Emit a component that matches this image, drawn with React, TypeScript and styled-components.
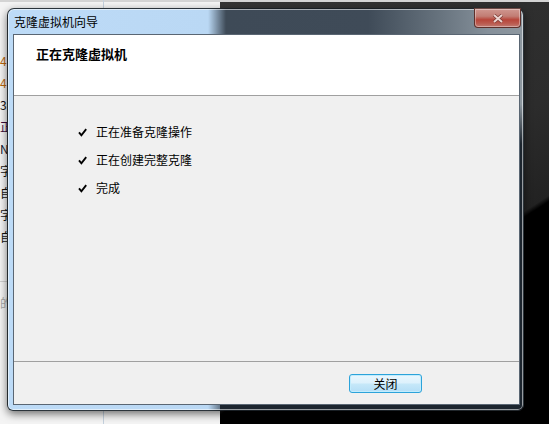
import styled, { createGlobalStyle } from "styled-components";

const GlobalStyle = createGlobalStyle`
  html, body {
    margin: 0;
    padding: 0;
  }
  body {
    width: 549px;
    height: 424px;
    overflow: hidden;
    background: #000;
    font-family: "Noto Sans CJK SC", "Noto Sans", sans-serif;
  }
`;

const steps = ["正在准备克隆操作", "正在创建完整克隆", "完成"];

// text of the window lying behind the dialog, mostly covered
const behindLines = [
  { text: "4", color: "#b8660c" },
  { text: "4", color: "#b8660c" },
  { text: "30", color: "#111" },
  { text: "正", color: "#3a0a3a" },
  { text: "N", color: "#0d1630" },
  { text: "字", color: "#111" },
  { text: "自", color: "#111" },
  { text: "字", color: "#111" },
  { text: "自", color: "#111" },
];

function CheckIcon() {
  return (
    <svg width="9" height="9" viewBox="0 0 9 9">
      <path d="M1 4.4 L3.4 7.3 L8.2 1.2" fill="none" stroke="#000" strokeWidth="1.9" />
    </svg>
  );
}

function CloseGlyph() {
  return (
    <svg width="12" height="9" viewBox="0 0 12 9">
      <path d="M2 1 L10 8 M10 1 L2 8" stroke="#7a3a34" strokeWidth="3.4" />
      <path d="M2 1 L10 8 M10 1 L2 8" stroke="#ecd4d0" strokeWidth="2" />
    </svg>
  );
}

export default function App() {
  return (
    <>
      <GlobalStyle />
      <Desktop>
        <BehindWindow>
          <BehindColumn>
            {behindLines.map((line, i) => (
              <BehindLine key={i} $color={line.color}>
                {line.text}
              </BehindLine>
            ))}
            <BehindRule />
            <BehindLine $color="#a8a8a8">的</BehindLine>
          </BehindColumn>
        </BehindWindow>

        <Dialog>
          <TitleBar>
            <Title>克隆虚拟机向导</Title>
            <CloseButton aria-label="关闭">
              <CloseGlyph />
            </CloseButton>
          </TitleBar>
          <Client>
            <Header>
              <HeaderTitle>正在克隆虚拟机</HeaderTitle>
            </Header>
            <Body>
              {steps.map((step) => (
                <StepRow key={step}>
                  <CheckIcon />
                  <span>{step}</span>
                </StepRow>
              ))}
            </Body>
            <Footer>
              <PushButton>关闭</PushButton>
            </Footer>
          </Client>
        </Dialog>
      </Desktop>
    </>
  );
}

const Desktop = styled.div`
  position: relative;
  width: 549px;
  height: 424px;
  box-sizing: border-box;
  padding: 8px 0 0 7px;
  overflow: hidden;
  background:
    linear-gradient(#d4d4d4, #d4d4d4) left top / 100% 2px no-repeat,
    linear-gradient(#f4f4f4, #f4f4f4) left top / 220px 100% no-repeat,
    linear-gradient(147deg, #353535 0, #2c2c2c 260px, #222 343px, #000 348px) right top / 329px 100% no-repeat,
    #000;
`;

const BehindWindow = styled.div`
  position: absolute;
  left: 0;
  top: 0;
  width: 220px;
  height: 100%;
  display: flex;
`;

const BehindColumn = styled.div`
  width: 104px;
  box-sizing: border-box;
  padding-top: 50px;
  border-right: 1px solid #c4d1de;
  display: flex;
  flex-direction: column;
  font-size: 12px;
  line-height: 22px;
`;

const BehindLine = styled.div<{ $color: string }>`
  color: ${(p) => p.$color};
  white-space: nowrap;
`;

const BehindRule = styled.div`
  height: 1px;
  margin: 33px 0 10px;
  background: #d0d0d0;
`;

const Dialog = styled.section`
  position: relative;
  z-index: 1;
  width: 517px;
  height: 403px;
  box-sizing: border-box;
  display: flex;
  flex-direction: column;
  padding: 0 3px 5px 5px;
  border: 1px solid rgba(18, 22, 26, 0.85);
  border-radius: 7px 7px 6px 6px;
  box-shadow:
    inset 0 0 0 1px rgba(255, 255, 255, 0.55),
    0 3px 9px rgba(0, 0, 0, 0.55);
  background:
    linear-gradient(to bottom, rgba(28, 38, 47, 0) 95px, #1c252e 135px) right top / calc(100% - 212px) 100% no-repeat,
    linear-gradient(
      to right,
      #bddbf7 0,
      #bad8f4 200px,
      #3e4a57 218px,
      #3f4b58 360px,
      #66727d 430px,
      #85909a 480px,
      #8d979f 100%
    );
`;

const TitleBar = styled.header`
  height: 25px;
  display: flex;
  align-items: flex-start;
  justify-content: space-between;
  padding-left: 1px;
  margin-right: -1px;
`;

const Title = styled.h1`
  margin: 0;
  font-size: 12px;
  font-weight: normal;
  line-height: 25px;
  color: #000;
`;

const CloseButton = styled.button`
  width: 47px;
  height: 20px;
  margin-top: -1px;
  padding: 0;
  display: flex;
  align-items: center;
  justify-content: center;
  border: 1px solid #5e2f2a;
  border-top-color: #6d4a46;
  border-radius: 0 0 4px 4px;
  box-shadow: inset 0 0 0 1px rgba(255, 255, 255, 0.35);
  background: linear-gradient(
    to bottom,
    #cf9790 0%,
    #c27d74 40%,
    #b7453a 60%,
    #bb5a4f 80%,
    #c07a72 100%
  );
`;

const Client = styled.main`
  flex: 1;
  display: flex;
  flex-direction: column;
  border: 1px solid #5a6673;
  background: #f0f0f0;
  font-size: 12px;
  color: #000;
`;

const Header = styled.div`
  height: 61px;
  box-sizing: border-box;
  padding: 11px 0 0 22px;
  background: #fff;
  border-bottom: 1px solid #a0a0a0;
`;

const HeaderTitle = styled.h2`
  margin: 0;
  font-size: 13px;
  font-weight: bold;
  line-height: 16px;
`;

const Body = styled.div`
  flex: 1;
  display: flex;
  flex-direction: column;
  padding: 22px 0 0 64px;
  border-bottom: 1px solid #a0a0a0;
`;

const StepRow = styled.div`
  height: 28px;
  display: flex;
  align-items: center;
  gap: 9px;
  line-height: 16px;
`;

const Footer = styled.div`
  height: 42px;
  box-sizing: border-box;
  display: flex;
  justify-content: flex-end;
  align-items: flex-start;
  padding: 12px 97px 0 0;
`;

const PushButton = styled.button`
  width: 73px;
  height: 19px;
  padding: 0;
  font-family: inherit;
  font-size: 12px;
  line-height: 16px;
  color: #000;
  border: 1px solid #2ca3da;
  border-radius: 3px;
  box-shadow: inset 0 0 0 1px #c2ecfd;
  background: linear-gradient(
    to bottom,
    #eaf7fe 0%,
    #dcf1fc 48%,
    #c6e8f9 52%,
    #b4def6 100%
  );
`;
